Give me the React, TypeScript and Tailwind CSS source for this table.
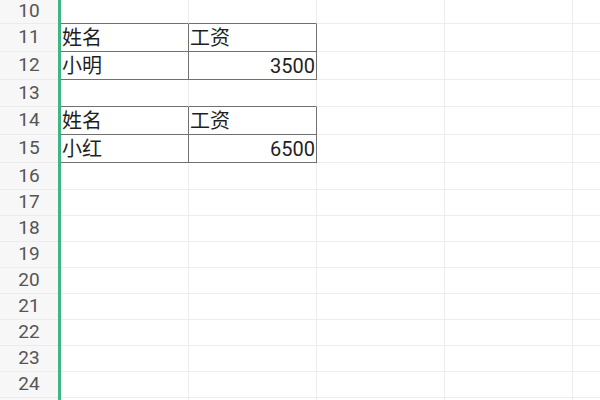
const rows: { n: number; h: number }[] = [
  { n: 10, h: 24 },
  { n: 11, h: 28 },
  { n: 12, h: 28 },
  { n: 13, h: 27 },
  { n: 14, h: 28 },
  { n: 15, h: 28 },
  { n: 16, h: 27 },
  { n: 17, h: 26 },
  { n: 18, h: 26 },
  { n: 19, h: 26 },
  { n: 20, h: 26 },
  { n: 21, h: 26 },
  { n: 22, h: 26 },
  { n: 23, h: 26 },
  { n: 24, h: 26 },
  { n: 25, h: 26 },
]

// cells with text: [A, B]
const data: Record<number, [string, string]> = {
  11: ['姓名', '工资'],
  12: ['小明', '3500'],
  14: ['姓名', '工资'],
  15: ['小红', '6500'],
}

const tableRows = [11, 12, 14, 15]
const aboveTable = [10, 13]

const font = { fontFamily: 'Roboto, "Noto Sans CJK SC", sans-serif' }

export default function App() {
  return (
    <div className="flex h-[400px] w-[600px] overflow-hidden bg-white" style={font}>
      {/* row headers */}
      <div className="flex w-[58px] shrink-0 flex-col bg-[#f7f7f7]">
        {rows.map((r) => (
          <div
            key={r.n}
            className="flex shrink-0 items-center justify-center border-b border-[#ececec] text-[19px] text-[#555555]"
            style={{ height: r.h }}
          >
            {/* last row is scrolled off, only its top edge shows */}
            {r.n < 25 ? r.n : ''}
          </div>
        ))}
      </div>

      {/* selection edge */}
      <div className="w-[3px] shrink-0 bg-[#3db683]" />

      {/* grid */}
      <div className="flex flex-1 flex-col">
        {rows.map((r) => {
          const inTable = tableRows.includes(r.n)
          const edge = inTable || aboveTable.includes(r.n)
          const d = data[r.n]
          return (
            <div key={r.n} className="flex shrink-0" style={{ height: r.h }}>
              <div
                className={`flex w-[128px] shrink-0 items-center border-b border-r pl-[1px] text-[20px] text-[#1f1f1f] ${
                  edge ? 'border-b-[#707070]' : 'border-b-[#ededed]'
                } ${inTable ? 'border-r-[#707070]' : 'border-r-[#ededed]'}`}
              >
                {d ? d[0] : ''}
              </div>
              <div
                className={`flex w-[128px] shrink-0 items-center border-b border-r px-[1px] text-[20px] text-[#1f1f1f] ${
                  edge ? 'border-b-[#707070]' : 'border-b-[#ededed]'
                } ${inTable ? 'border-r-[#707070]' : 'border-r-[#ededed]'} ${
                  d && /^\d+$/.test(d[1]) ? 'justify-end' : 'justify-start'
                }`}
              >
                {d ? d[1] : ''}
              </div>
              <div className="w-[128px] shrink-0 border-b border-r border-[#ededed]" />
              <div className="w-[128px] shrink-0 border-b border-r border-[#ededed]" />
              <div className="flex-1 border-b border-[#ededed]" />
            </div>
          )
        })}
      </div>
    </div>
  )
}
